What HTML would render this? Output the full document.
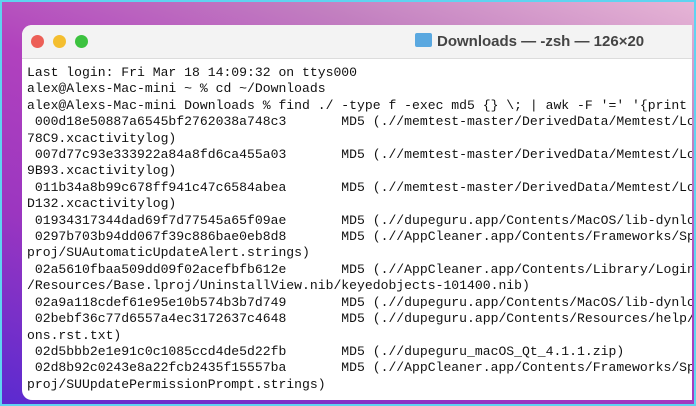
<!DOCTYPE html>
<html><head><style>
html,body{margin:0;padding:0}
body{width:696px;height:406px;overflow:hidden;position:relative;
background:linear-gradient(200deg,#e7b6d6 0%,#c27fc0 22%,#b142be 45%,#9b36c0 70%,#5a2ad0 100%);
box-shadow:inset 0 0 0 2px #5fd3f0;}
.win{position:absolute;left:22px;top:25px;width:670px;height:375px;background:#fff;border-radius:10px 0 0 10px;overflow:hidden}
.tb{height:33px;background:#f3f3f3;border-bottom:1px solid #dcdcdc;position:relative}
.d{position:absolute;top:10px;width:13px;height:13px;border-radius:50%}
.title{position:absolute;left:393px;top:8px;font:bold 15px "Liberation Sans",sans-serif;color:#444;white-space:nowrap}
.fold{display:inline-block;width:17px;height:14px;background:#5aa8e0;border-radius:2px;vertical-align:-1px;margin-right:5px;position:relative}
pre{margin:0;position:absolute;left:5px;top:40px;font:13.1px/16.4px "Liberation Mono",monospace;color:#111;white-space:pre}
.b{position:absolute;left:1px;color:#bbb}
</style></head><body>
<div class="win">
<div class="tb">
<div class="d" style="left:9px;background:#ec5f57"></div>
<div class="d" style="left:31px;background:#f4be2f"></div>
<div class="d" style="left:53px;background:#3cc23f"></div>
<div class="title"><span class="fold"></span>Downloads — -zsh — 126×20</div>
</div>
<pre>Last login: Fri Mar 18 14:09:32 on ttys000
alex@Alexs-Mac-mini ~ % cd ~/Downloads
alex@Alexs-Mac-mini Downloads % find ./ -type f -exec md5 {} \; | awk -F '=' '{print
 000d18e50887a6545bf2762038a748c3       MD5 (.//memtest-master/DerivedData/Memtest/Lo
78C9.xcactivitylog)
 007d77c93e333922a84a8fd6ca455a03       MD5 (.//memtest-master/DerivedData/Memtest/Lo
9B93.xcactivitylog)
 011b34a8b99c678ff941c47c6584abea       MD5 (.//memtest-master/DerivedData/Memtest/Lo
D132.xcactivitylog)
 01934317344dad69f7d77545a65f09ae       MD5 (.//dupeguru.app/Contents/MacOS/lib-dynlo
 0297b703b94dd067f39c886bae0eb8d8       MD5 (.//AppCleaner.app/Contents/Frameworks/Sp
proj/SUAutomaticUpdateAlert.strings)
 02a5610fbaa509dd09f02acefbfb612e       MD5 (.//AppCleaner.app/Contents/Library/Login
/Resources/Base.lproj/UninstallView.nib/keyedobjects-101400.nib)
 02a9a118cdef61e95e10b574b3b7d749       MD5 (.//dupeguru.app/Contents/MacOS/lib-dynlo
 02bebf36c77d6557a4ec3172637c4648       MD5 (.//dupeguru.app/Contents/Resources/help/
ons.rst.txt)
 02d5bbb2e1e91c0c1085ccd4de5d22fb       MD5 (.//dupeguru_macOS_Qt_4.1.1.zip)
 02d8b92c0243e8a22fcb2435f15557ba       MD5 (.//AppCleaner.app/Contents/Frameworks/Sp
proj/SUUpdatePermissionPrompt.strings)</pre>
</div>
</body></html>
